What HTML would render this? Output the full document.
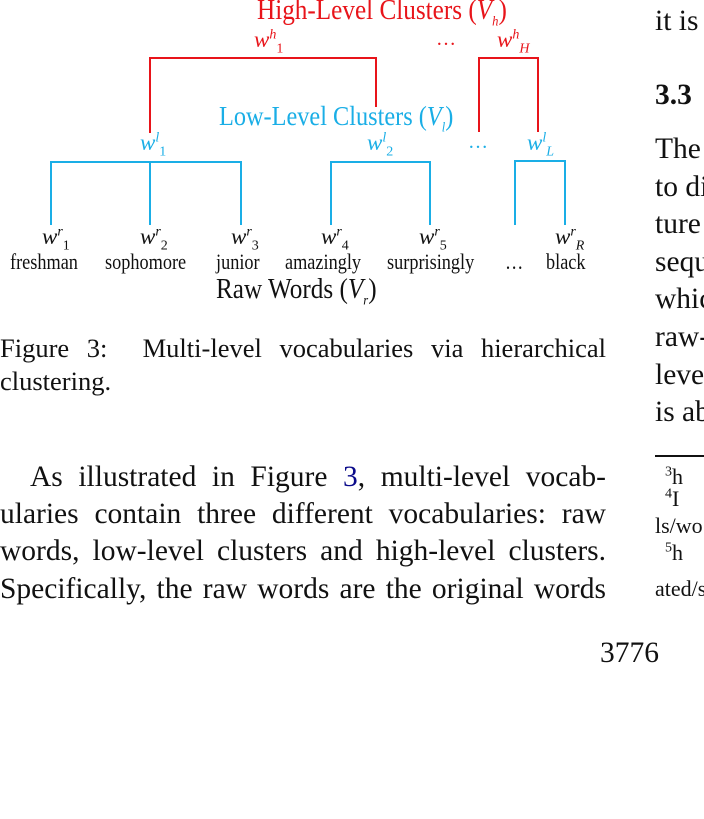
<!DOCTYPE html>
<html><head><meta charset="utf-8"><style>
body{margin:0;width:704px;height:819px;background:#fff;overflow:hidden;position:relative;font-family:"Liberation Serif",serif;color:#111}
.a{position:absolute;white-space:nowrap}
.l{position:absolute}
.r{color:#e8141a}.b{color:#1aaee6}
.j{position:absolute;left:0;width:606px;text-align:justify;text-align-last:justify;font-size:29.5px;line-height:30px;white-space:nowrap}
sub,sup{font-size:14px;line-height:0}
.w{position:absolute;font-style:italic;font-size:23px}
.fw{position:absolute;font-size:22px;transform:scaleX(.83);transform-origin:left;white-space:nowrap}
.c{transform:scaleX(.9);transform-origin:left}
</style></head><body>
<div class="l" style="left:149px;top:57px;width:228px;height:2px;background:#e8141a"></div>
<div class="l" style="left:149px;top:57px;width:2px;height:76px;background:#e8141a"></div>
<div class="l" style="left:375px;top:57px;width:2px;height:50px;background:#e8141a"></div>
<div class="l" style="left:478px;top:57px;width:61px;height:2px;background:#e8141a"></div>
<div class="l" style="left:478px;top:57px;width:2px;height:75px;background:#e8141a"></div>
<div class="l" style="left:537px;top:57px;width:2px;height:75px;background:#e8141a"></div>
<div class="l" style="left:50px;top:161px;width:192px;height:1.5px;background:#1aaee6"></div>
<div class="l" style="left:50px;top:161px;width:1.5px;height:64px;background:#1aaee6"></div>
<div class="l" style="left:149px;top:161px;width:1.5px;height:64px;background:#1aaee6"></div>
<div class="l" style="left:240px;top:161px;width:1.5px;height:64px;background:#1aaee6"></div>
<div class="l" style="left:330px;top:161px;width:101px;height:1.5px;background:#1aaee6"></div>
<div class="l" style="left:330px;top:161px;width:1.5px;height:64px;background:#1aaee6"></div>
<div class="l" style="left:429px;top:161px;width:1.5px;height:64px;background:#1aaee6"></div>
<div class="l" style="left:514px;top:160px;width:52px;height:1.5px;background:#1aaee6"></div>
<div class="l" style="left:514px;top:160px;width:1.5px;height:65px;background:#1aaee6"></div>
<div class="l" style="left:564px;top:160px;width:1.5px;height:65px;background:#1aaee6"></div>
<div class="a r c" style="left:257px;top:-5px;font-size:28px">High-Level Clusters (<i>V<sub>h</sub></i>)</div>
<div class="w r" style="left:254px;top:27px">w<sup>h</sup><sub style="font-style:normal">1</sub></div>
<div class="a r" style="left:436px;top:28px;font-size:20px">…</div>
<div class="w r" style="left:497px;top:27px">w<sup>h</sup><sub>H</sub></div>
<div class="a b c" style="left:219px;top:101px;font-size:27px">Low-Level Clusters (<i>V<sub>l</sub></i>)</div>
<div class="w b" style="left:140px;top:130px">w<sup>l</sup><sub style="font-style:normal">1</sub></div>
<div class="w b" style="left:367px;top:130px">w<sup>l</sup><sub style="font-style:normal">2</sub></div>
<div class="a b" style="left:468px;top:131px;font-size:20px">…</div>
<div class="w b" style="left:527px;top:130px">w<sup>l</sup><sub>L</sub></div>
<div class="w" style="left:42px;top:224px">w<sup>r</sup><sub style="font-style:normal">1</sub></div>
<div class="w" style="left:140px;top:224px">w<sup>r</sup><sub style="font-style:normal">2</sub></div>
<div class="w" style="left:231px;top:224px">w<sup>r</sup><sub style="font-style:normal">3</sub></div>
<div class="w" style="left:321px;top:224px">w<sup>r</sup><sub style="font-style:normal">4</sub></div>
<div class="w" style="left:419px;top:224px">w<sup>r</sup><sub style="font-style:normal">5</sub></div>
<div class="w" style="left:555px;top:224px">w<sup>r</sup><sub>R</sub></div>
<div class="fw" style="left:10px;top:249px">freshman</div>
<div class="fw" style="left:105px;top:249px">sophomore</div>
<div class="fw" style="left:216px;top:249px">junior</div>
<div class="fw" style="left:285px;top:249px">amazingly</div>
<div class="fw" style="left:387px;top:249px">surprisingly</div>
<div class="fw" style="left:505px;top:249px">…</div>
<div class="fw" style="left:546px;top:249px">black</div>
<div class="a c" style="left:216px;top:274px;font-size:28px">Raw Words (<i>V<sub>r</sub></i>)</div>
<div class="j" style="top:333px;font-size:26.5px">Figure 3: &nbsp;Multi-level vocabularies via hierarchical</div>
<div class="a" style="left:0;top:366px;font-size:26.5px;line-height:30px">clustering.</div>
<div class="j" style="top:462px;left:30px;width:576px">As illustrated in Figure <span style="color:#0a0a8a">3</span>, multi-level vocab-</div>
<div class="j" style="top:499px">ularies contain three different vocabularies: raw</div>
<div class="j" style="top:536px">words, low-level clusters and high-level clusters.</div>
<div class="j" style="top:574px">Specifically, the raw words are the original words</div>
<div class="a" style="left:600px;top:638px;font-size:29.5px;line-height:30px">3776</div>
<div class="a" style="left:655px;top:6px;font-size:29.5px;line-height:30px">it is</div>
<div class="a" style="left:655px;top:80px;font-size:29.5px;line-height:30px;font-weight:bold">3.3</div>
<div class="a" style="left:655px;top:131px;font-size:29.5px;line-height:37.6px">The<br>to di<br>ture<br>sequ<br>whic<br>raw-<br>level<br>is ab</div>
<div class="l" style="left:655px;top:455px;width:49px;height:1.5px;background:#111"></div>
<div class="a" style="left:665px;top:464px;font-size:22px"><sup>3</sup>h</div>
<div class="a" style="left:665px;top:486px;font-size:22px"><sup>4</sup>I</div>
<div class="a" style="left:655px;top:513px;font-size:22px">ls/wo</div>
<div class="a" style="left:665px;top:540px;font-size:22px"><sup>5</sup>h</div>
<div class="a" style="left:655px;top:576px;font-size:22px">ated/s</div>
</body></html>
